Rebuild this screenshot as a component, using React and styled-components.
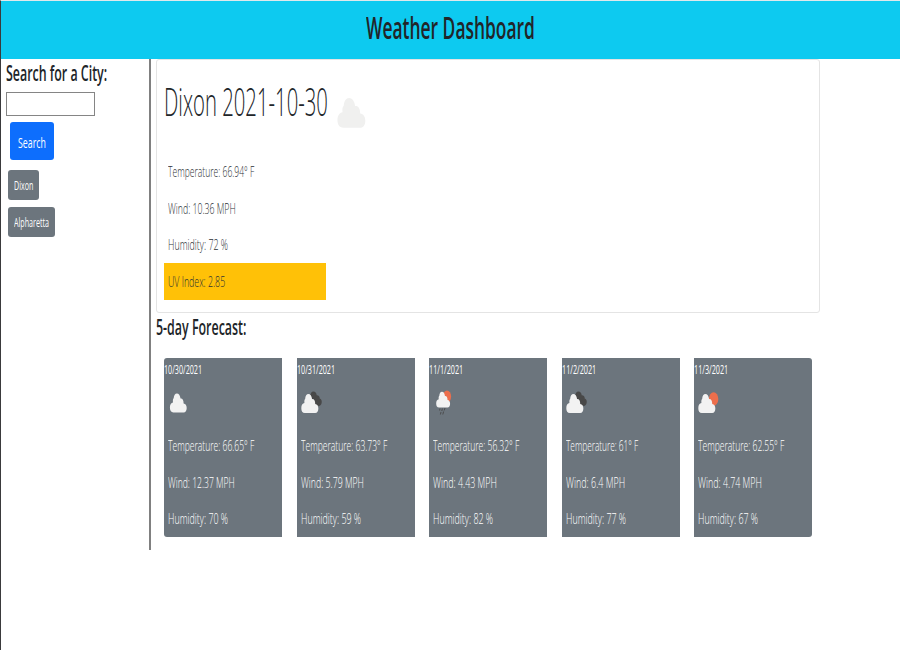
import React, { useLayoutEffect, useRef, useState } from 'react';
import styled, { createGlobalStyle } from 'styled-components';

const GlobalStyle = createGlobalStyle`
  * { box-sizing: border-box; }
  body {
    margin: 0;
    background: #fff;
    color: #212529;
    font-family: 'Open Sans', 'Noto Sans', sans-serif;
  }
`;

const Page = styled.div`
  width: 900px;
  height: 650px;
  overflow: hidden;
  border-left: 1px solid #3a3a3c;
  border-top: 1px solid #dfe9ec;
  background: #fff;
`;

const Header = styled.header`
  height: 58px;
  padding-bottom: 5px;
  display: flex;
  align-items: center;
  justify-content: center;
  background: #0dcaf0;
`;

const Title = styled.h1`
  margin: 0;
  width: 169px;
  font-size: 30.5px;
  line-height: 39px;
  font-weight: 600;
`;

const Body = styled.div`
  display: flex;
  align-items: flex-start;
`;

const Sidebar = styled.aside`
  width: 150px;
  height: 491px;
  padding: 0 0 0 5.4px;
  border-right: 2px solid #808080;
  display: flex;
  flex-direction: column;
  align-items: flex-start;
`;

const Heading = styled.h2`
  margin: 0;
  height: 30px;
  font-size: 21px;
  line-height: 28px;
  font-weight: 600;
`;

const CityInput = styled.input`
  width: 89px;
  height: 24px;
  margin: 3px 0 6px 0;
  border: 1px solid #858585;
  border-radius: 0;
  background: #fff;
`;

const Button = styled.button`
  display: flex;
  align-items: center;
  border: 0;
  color: #fff;
  font-family: inherit;
  border-radius: 3px;
`;

const SearchButton = styled(Button)`
  width: 44px;
  height: 38px;
  margin: 0 0 10px 4px;
  padding: 2px 0 0 8px;
  font-size: 14.5px;
  background: #0d6efd;
`;

const CityButton = styled(Button)`
  width: ${(p) => p.$width}px;
  height: 30px;
  margin: 0 0 7px 2px;
  padding: 1px 0 0 6px;
  font-size: 12px;
  background: #6c757d;
`;

const Main = styled.main`
  width: 664px;
  margin-left: 5px;
`;

const Current = styled.section`
  height: 254px;
  padding: 18px 7px 0;
  border: 1px solid #e4e4e4;
  border-radius: 3px;
`;

const CurrentTitle = styled.div`
  display: flex;
  align-items: flex-start;
  height: 75px;
`;

const CityDate = styled.h2`
  margin: 0;
  width: 163px;
  font-size: 38px;
  line-height: 47px;
  font-weight: 300;
`;

const CurrentIcon = styled.div`
  margin: 19px 0 0 10px;
`;

const Reading = styled.div`
  width: ${(p) => (p.$wide ? '162px' : 'auto')};
  height: 36.65px;
  padding-left: 4px;
  font-size: 15.3px;
  line-height: 37px;
  font-weight: 300;
  color: ${(p) => (p.$light ? '#fff' : '#2d3135')};
  background: ${(p) => (p.$alert ? '#ffc107' : 'transparent')};
`;

const ForecastTitle = styled(Heading)`
  height: 45px;
`;

const Forecast = styled.section`
  display: grid;
  grid-template-columns: repeat(5, 118px);
  column-gap: 14.5px;
  padding-left: 8.2px;
`;

const DayCard = styled.article`
  height: 179px;
  background: #6c757d;
  color: #fff;

  &:first-child { border-radius: 3px 0 0 3px; }
  &:last-child { border-radius: 0 3px 3px 0; }
`;

const DayDate = styled.div`
  height: 22px;
  padding-left: 0.3px;
  font-size: 11.7px;
  line-height: 22px;
`;

const DayIcon = styled.div`
  height: 47px;
  padding: 6px 0 0 4px;
`;

const Squeezed = styled.span`
  display: inline-block;
  white-space: nowrap;
  transform-origin: 0 50%;
`;

const Svg = styled.svg`
  display: block;
`;

// Condenses a line of text horizontally to the given width.
function Fit({ width, children }) {
  const ref = useRef(null);
  const [scale, setScale] = useState(0.6);
  useLayoutEffect(() => {
    setScale(width / ref.current.offsetWidth);
  }, [width]);
  return (
    <Squeezed ref={ref} style={{ transform: `scaleX(${scale})` }}>
      {children}
    </Squeezed>
  );
}

const CLOUD = 'M6 30C2.6 30 1 27.8 1 24.6C1 21.4 2.8 19.4 5.4 19C5 17 5.4 15 6.4 14.4C6.8 11 8.4 9 11 9C13.6 9 15.6 11 16.2 14.6C18.6 14.2 20.6 16 20.6 20C23.3 20.2 25 22.2 25 25C25 28 23.3 30 20.6 30Z';

function WeatherIcon({ kind }) {
  if (kind === 'large') {
    return (
      <Svg width="30" height="32" viewBox="0 0 30 32">
        <path transform="translate(-0.7 -11.6) scale(1.16 1.41)" fill="#f0f0ef" d={CLOUD} />
      </Svg>
    );
  }
  const rain = kind === 'rain';
  return (
    <Svg width="28" height="36" viewBox="0 0 28 36">
      {kind === 'broken' && (
        <path
          fill="#484848"
          transform="translate(-2.3 -0.4)"
          d="M10 13C11 10 11.2 8.8 12 8.4C12.4 6.8 13.4 5.8 14.7 6C16.6 6 17.7 7.4 18 9.6C20 9.5 21.2 10.8 21 13C22.6 13.4 23.3 15 23 17C22.8 19 21.5 20.4 20 20.4L12 18Z"
        />
      )}
      {kind === 'sun' && <ellipse cx="15.6" cy="13" rx="4.7" ry="6.8" fill="#ec6e4c" />}
      {rain && <ellipse cx="14" cy="10.6" rx="4.1" ry="6.1" fill="#ec6e4c" />}
      <path
        fill="#f2f2f2"
        transform={
          rain
            ? 'translate(2.6 -1) scale(.58 .75)'
            : kind === 'cloud'
              ? 'translate(1.2 -0.6) scale(.7 .9)'
              : 'translate(-0.4 0) scale(.71 .9)'
        }
        d={CLOUD}
      />
      {rain && (
        <path
          stroke="#484848"
          strokeWidth="0.9"
          fill="none"
          d="M7 22.5L6.6 24.5M9.4 22.5L8.8 25M12 22L11.2 24.5M8 26L7.4 28.5M10.6 25.5L9.8 28.5"
        />
      )}
    </Svg>
  );
}

const days = [
  { date: '10/30/2021', dw: 38, icon: 'cloud', temp: '66.65', tw: 86, wind: '12.37', ww: 67, hum: 70 },
  { date: '10/31/2021', dw: 38, icon: 'broken', temp: '63.73', tw: 86, wind: '5.79', ww: 63, hum: 59 },
  { date: '11/1/2021', dw: 34, icon: 'rain', temp: '56.32', tw: 86, wind: '4.43', ww: 64, hum: 82 },
  { date: '11/2/2021', dw: 34, icon: 'broken', temp: '61', tw: 72, wind: '6.4', ww: 59, hum: 77 },
  { date: '11/3/2021', dw: 34, icon: 'sun', temp: '62.55', tw: 86, wind: '4.74', ww: 64, hum: 67 },
];

export default function App() {
  return (
    <>
      <GlobalStyle />
      <Page>
        <Header>
          <Title><Fit width={169}>Weather Dashboard</Fit></Title>
        </Header>
        <Body>
          <Sidebar>
            <Heading><Fit width={101}>Search for a City:</Fit></Heading>
            <CityInput aria-label="City" />
            <SearchButton><Fit width={28}>Search</Fit></SearchButton>
            <CityButton $width={31}><Fit width={19.5}>Dixon</Fit></CityButton>
            <CityButton $width={47}><Fit width={35}>Alpharetta</Fit></CityButton>
          </Sidebar>
          <Main>
            <Current>
              <CurrentTitle>
                <CityDate><Fit width={164}>Dixon 2021-10-30</Fit></CityDate>
                <CurrentIcon><WeatherIcon kind="large" /></CurrentIcon>
              </CurrentTitle>
              <Reading><Fit width={86}>Temperature: 66.94° F</Fit></Reading>
              <Reading><Fit width={68}>Wind: 10.36 MPH</Fit></Reading>
              <Reading><Fit width={60}>Humidity: 72 %</Fit></Reading>
              <Reading $wide $alert><Fit width={57}>UV Index: 2.85</Fit></Reading>
            </Current>
            <ForecastTitle><Fit width={90.5}>5-day Forecast:</Fit></ForecastTitle>
            <Forecast>
              {days.map((d) => (
                <DayCard key={d.date}>
                  <DayDate><Fit width={d.dw}>{d.date}</Fit></DayDate>
                  <DayIcon><WeatherIcon kind={d.icon} /></DayIcon>
                  <Reading $light><Fit width={d.tw}>{`Temperature: ${d.temp}° F`}</Fit></Reading>
                  <Reading $light><Fit width={d.ww}>{`Wind: ${d.wind} MPH`}</Fit></Reading>
                  <Reading $light><Fit width={60}>{`Humidity: ${d.hum} %`}</Fit></Reading>
                </DayCard>
              ))}
            </Forecast>
          </Main>
        </Body>
      </Page>
    </>
  );
}
